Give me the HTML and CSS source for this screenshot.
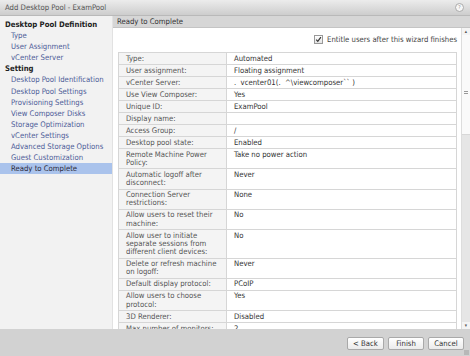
FILE: index.html
```html
<!DOCTYPE html>
<html lang="en">
<head>
<meta charset="UTF-8" />
<title>Add Desktop Pool - ExamPool</title>
<link rel="stylesheet" href="styles.css">
</head>
<body>

<div class="window">
  <div class="titlebar">
    <span class="title">Add Desktop Pool - ExamPool</span>
    <span class="help">?</span>
  </div>

  <div class="main">
    <div class="sidebar">
      <div class="group">Desktop Pool Definition</div>
      <div class="step">Type</div>
      <div class="step">User Assignment</div>
      <div class="step">vCenter Server</div>
      <div class="group">Setting</div>
      <div class="step">Desktop Pool Identification</div>
      <div class="step">Desktop Pool Settings</div>
      <div class="step">Provisioning Settings</div>
      <div class="step">View Composer Disks</div>
      <div class="step">Storage Optimization</div>
      <div class="step">vCenter Settings</div>
      <div class="step">Advanced Storage Options</div>
      <div class="step">Guest Customization</div>
      <div class="step active">Ready to Complete</div>
    </div>

    <div class="content">
      <div class="content-head">Ready to Complete</div>
      <div class="content-body">
        <div class="pane">
          <label class="entitle">
            <span class="check">
              <svg width="7" height="7" viewBox="0 0 7 7"><path d="M1.2 3.6 L2.8 5.3 L5.9 1.2" fill="none" stroke="#333" stroke-width="1.2"/></svg>
            </span>
            Entitle users after this wizard finishes
          </label>

          <table class="summary">
            <tr><td class="k">Type:</td><td>Automated</td></tr>
            <tr><td class="k">User assignment:</td><td>Floating assignment</td></tr>
            <tr><td class="k">vCenter Server:</td><td>.&nbsp; vcenter01(.&nbsp; ^\viewcomposer`` )</td></tr>
            <tr><td class="k">Use View Composer:</td><td>Yes</td></tr>
            <tr><td class="k">Unique ID:</td><td>ExamPool</td></tr>
            <tr><td class="k">Display name:</td><td></td></tr>
            <tr><td class="k">Access Group:</td><td>/</td></tr>
            <tr><td class="k">Desktop pool state:</td><td>Enabled</td></tr>
            <tr><td class="k">Remote Machine Power Policy:</td><td>Take no power action</td></tr>
            <tr><td class="k">Automatic logoff after disconnect:</td><td>Never</td></tr>
            <tr><td class="k">Connection Server restrictions:</td><td>None</td></tr>
            <tr><td class="k">Allow users to reset their machine:</td><td>No</td></tr>
            <tr><td class="k">Allow user to initiate separate sessions from different client devices:</td><td>No</td></tr>
            <tr><td class="k">Delete or refresh machine on logoff:</td><td>Never</td></tr>
            <tr><td class="k">Default display protocol:</td><td>PCoIP</td></tr>
            <tr><td class="k">Allow users to choose protocol:</td><td>Yes</td></tr>
            <tr><td class="k">3D Renderer:</td><td>Disabled</td></tr>
            <tr><td class="k">Max number of monitors:</td><td>2</td></tr>
          </table>
        </div>
        <div class="scrollbar">
          <span class="arrow">&#9652;</span>
          <div class="track">
            <div class="thumb"><span class="grip"></span></div>
          </div>
          <span class="arrow">&#9662;</span>
        </div>
      </div>
    </div>
  </div>

  <div class="footer">
    <button class="btn">&lt; Back</button>
    <button class="btn">Finish</button>
    <button class="btn">Cancel</button>
    <span class="resize"></span>
  </div>
</div>

</body>
</html>
```

FILE: styles.css
```css
body {
  margin: 0;
  font-family: "DejaVu Sans Condensed", "DejaVu Sans", sans-serif;
  font-size: 7.7px;
  color: #333;
}
.window {
  width: 470px;
  height: 356px;
  display: flex;
  flex-direction: column;
  overflow: hidden;
  background: #f2f2f2;
}
.titlebar {
  height: 16px;
  flex: none;
  display: flex;
  align-items: center;
  justify-content: space-between;
  padding: 0 6px 0 5px;
  background: linear-gradient(#ececec, #cdcdcd);
  border-bottom: 1px solid #b9b9b9;
  box-sizing: border-box;
  color: #555;
}
.help {
  width: 7px;
  height: 7px;
  border: 1px solid #aaa;
  border-radius: 50%;
  background: #f6f6f6;
  color: #888;
  font-size: 5px;
  line-height: 7px;
  text-align: center;
}
.main {
  flex: 1;
  display: flex;
  min-height: 0;
}
.sidebar {
  width: 112px;
  flex: none;
  padding-top: 3px;
  background: #f2f2f2;
  line-height: 11.1px;
}
.group {
  padding-left: 5px;
  font-weight: bold;
  color: #222;
}
.step {
  padding-left: 11px;
  color: #4d5c98;
}
.step.active {
  background: #aac3ec;
  color: #2a2a3a;
}
.content {
  flex: 1;
  display: flex;
  flex-direction: column;
  min-width: 0;
  background: #fff;
  border-left: 1px solid #e2e2e2;
}
.content-head {
  height: 12px;
  flex: none;
  line-height: 11px;
  padding-left: 4px;
  background: #d6d6d6;
  border-bottom: 1px solid #c4c4c4;
  box-sizing: border-box;
  color: #333;
}
.content-body {
  flex: 1;
  display: flex;
  min-height: 0;
}
.pane {
  flex: 1;
  overflow: hidden;
  padding: 7px 4px 0 5px;
}
.entitle {
  display: flex;
  align-items: center;
  justify-content: flex-end;
  gap: 4px;
  height: 8px;
  margin-bottom: 9px;
  color: #444;
}
.check {
  width: 7px;
  height: 7px;
  border: 1px solid #999;
  background: linear-gradient(#fff, #e4e4e4);
  display: flex;
}
.summary {
  width: 100%;
  border-collapse: collapse;
  table-layout: fixed;
  line-height: 8.25px;
}
.summary td {
  border: 1px solid #d6d6d6;
  padding: 1.5px 6px 1.25px 7px;
  vertical-align: top;
  color: #333;
}
.summary td.k {
  width: 108px;
  box-sizing: border-box;
  background: #f4f4f4;
  color: #555;
}
.scrollbar {
  width: 8px;
  flex: none;
  display: flex;
  flex-direction: column;
  align-items: center;
  background: #f4f4f4;
  border-left: 1px solid #ddd;
}
.arrow {
  font-size: 5px;
  line-height: 7px;
  color: #555;
}
.track {
  flex: 1;
  width: 100%;
  background: #e6e6e6;
}
.thumb {
  height: 100px;
  background: #fafafa;
  border-bottom: 1px solid #d8d8d8;
  display: flex;
  justify-content: center;
  padding-top: 56px;
  box-sizing: border-box;
}
.grip {
  width: 4px;
  height: 4px;
  background: repeating-linear-gradient(#999 0 1px, transparent 1px 2px);
}
.footer {
  height: 27px;
  flex: none;
  display: flex;
  justify-content: flex-end;
  align-items: flex-start;
  gap: 4px;
  padding: 8px 6px 0 0;
  box-sizing: border-box;
  background: #d2d2d2;
  position: relative;
}
.btn {
  height: 13px;
  padding: 0;
  width: 36px;
  font-family: inherit;
  font-size: 7.7px;
  color: #333;
  background: linear-gradient(#ffffff, #ebebeb);
  border: 1px solid #a9a9a9;
  border-radius: 2px;
}
.btn:first-child {
  width: 37px;
}
.resize {
  position: absolute;
  right: 1px;
  bottom: 1px;
  width: 5px;
  height: 5px;
  background: radial-gradient(circle, #999 0.6px, transparent 0.8px) 0 0 / 2px 2px;
}
```
